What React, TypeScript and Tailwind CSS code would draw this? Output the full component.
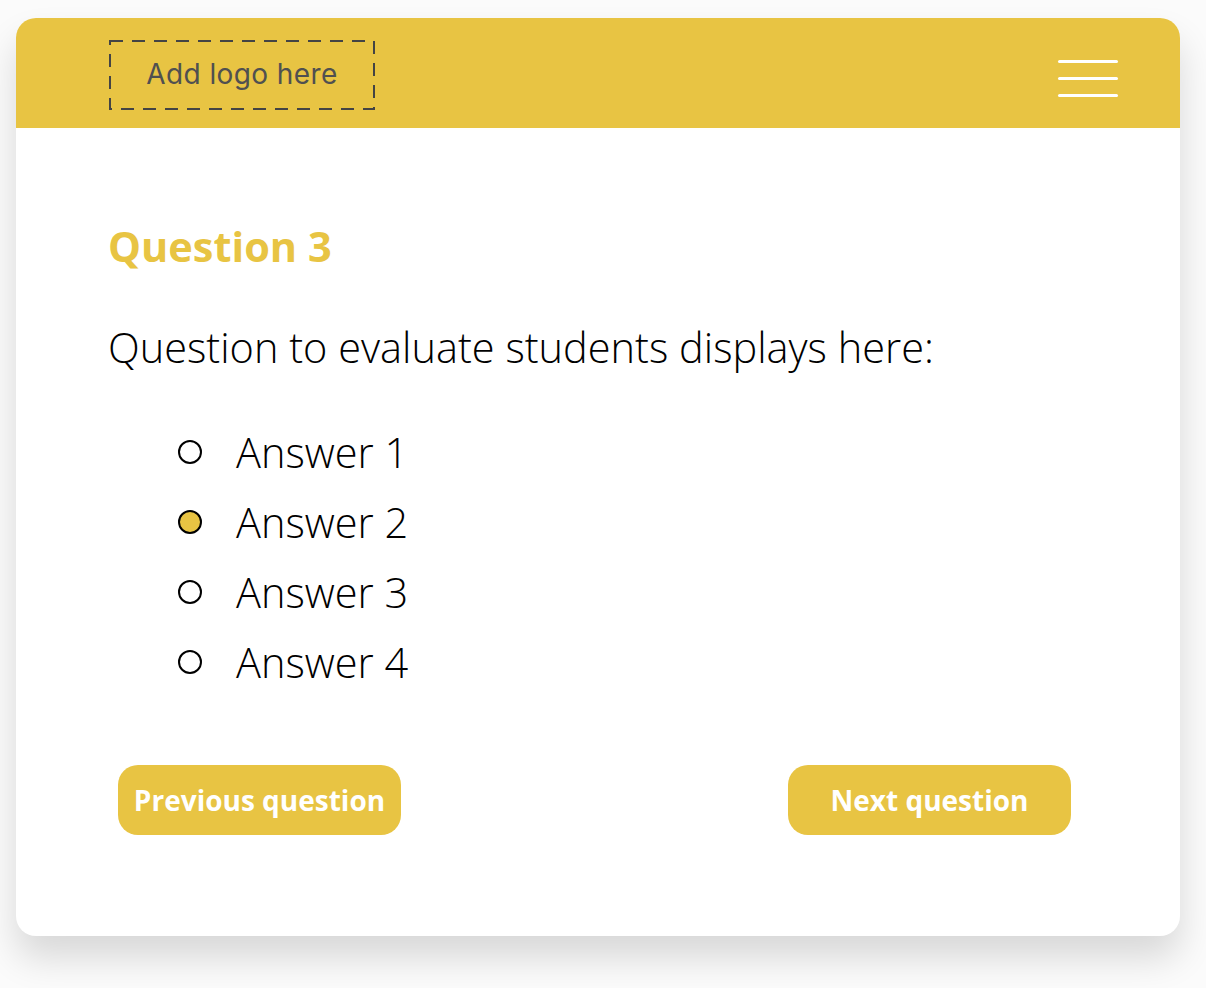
import { useState } from 'react';

const ANSWERS = ['Answer 1', 'Answer 2', 'Answer 3', 'Answer 4'];

function Hamburger() {
  return (
    <div className="mt-[42px] flex w-[60px] flex-col gap-[14px]">
      <span className="h-[3px] w-full rounded-full bg-white" />
      <span className="h-[3px] w-full rounded-full bg-white" />
      <span className="h-[3px] w-full rounded-full bg-white" />
    </div>
  );
}

function LogoSlot() {
  return (
    <div className="relative mt-[22px] flex h-[70px] w-[266px] items-center justify-center pb-[2px] font-['Inter',sans-serif] text-[28px] tracking-[0.4px] text-[#505050]">
      <svg className="absolute inset-0" width="266" height="70" viewBox="0 0 266 70">
        <rect
          x="1"
          y="1"
          width="264"
          height="68"
          fill="none"
          stroke="#444444"
          strokeWidth="2"
          strokeDasharray="13 9"
        />
      </svg>
      <span className="relative">Add logo here</span>
    </div>
  );
}

export default function App() {
  const [picked, setPicked] = useState(1);

  return (
    <div className="min-h-[988px] bg-[#fbfbfb] px-4 pt-[18px] font-['Open_Sans',sans-serif]">
      <div className="h-[918px] w-[1164px] overflow-hidden rounded-[20px] bg-white shadow-[0_22px_36px_rgba(0,0,0,0.14)]">
        <header className="flex h-[110px] items-start justify-between bg-[#e8c443] pl-[93px] pr-[62px]">
          <LogoSlot />
          <Hamburger />
        </header>

        <main className="pl-[92px] pt-[90px]">
          <h1 className="text-[41.5px] font-bold leading-[56px] text-[#e8c443]">Question 3</h1>
          <p className="mt-[45px] text-[41.5px] font-light leading-[56px] text-black">
            Question to evaluate students displays here:
          </p>

          <ul className="mt-[42px] flex flex-col pl-[70px]">
            {ANSWERS.map((a, i) => (
              <li
                key={a}
                className="flex h-[70px] cursor-pointer items-center gap-[34px]"
                onClick={() => setPicked(i)}
              >
                <span
                  className={
                    i === picked
                      ? 'h-[24px] w-[24px] rounded-full border-2 border-black bg-[#e8c443]'
                      : 'h-[24px] w-[24px] rounded-full border-2 border-black bg-white'
                  }
                />
                <span className="text-[41.5px] font-light leading-[56px] text-black">{a}</span>
              </li>
            ))}
          </ul>

          <div className="mt-[68px] flex w-[963px] justify-between pl-[10px]">
            <button className="h-[70px] w-[283px] rounded-[20px] bg-[#e8c443] text-[28px] font-bold text-white">
              Previous question
            </button>
            <button className="h-[70px] w-[283px] rounded-[20px] bg-[#e8c443] text-[28px] font-bold text-white">
              Next question
            </button>
          </div>
        </main>
      </div>
    </div>
  );
}
